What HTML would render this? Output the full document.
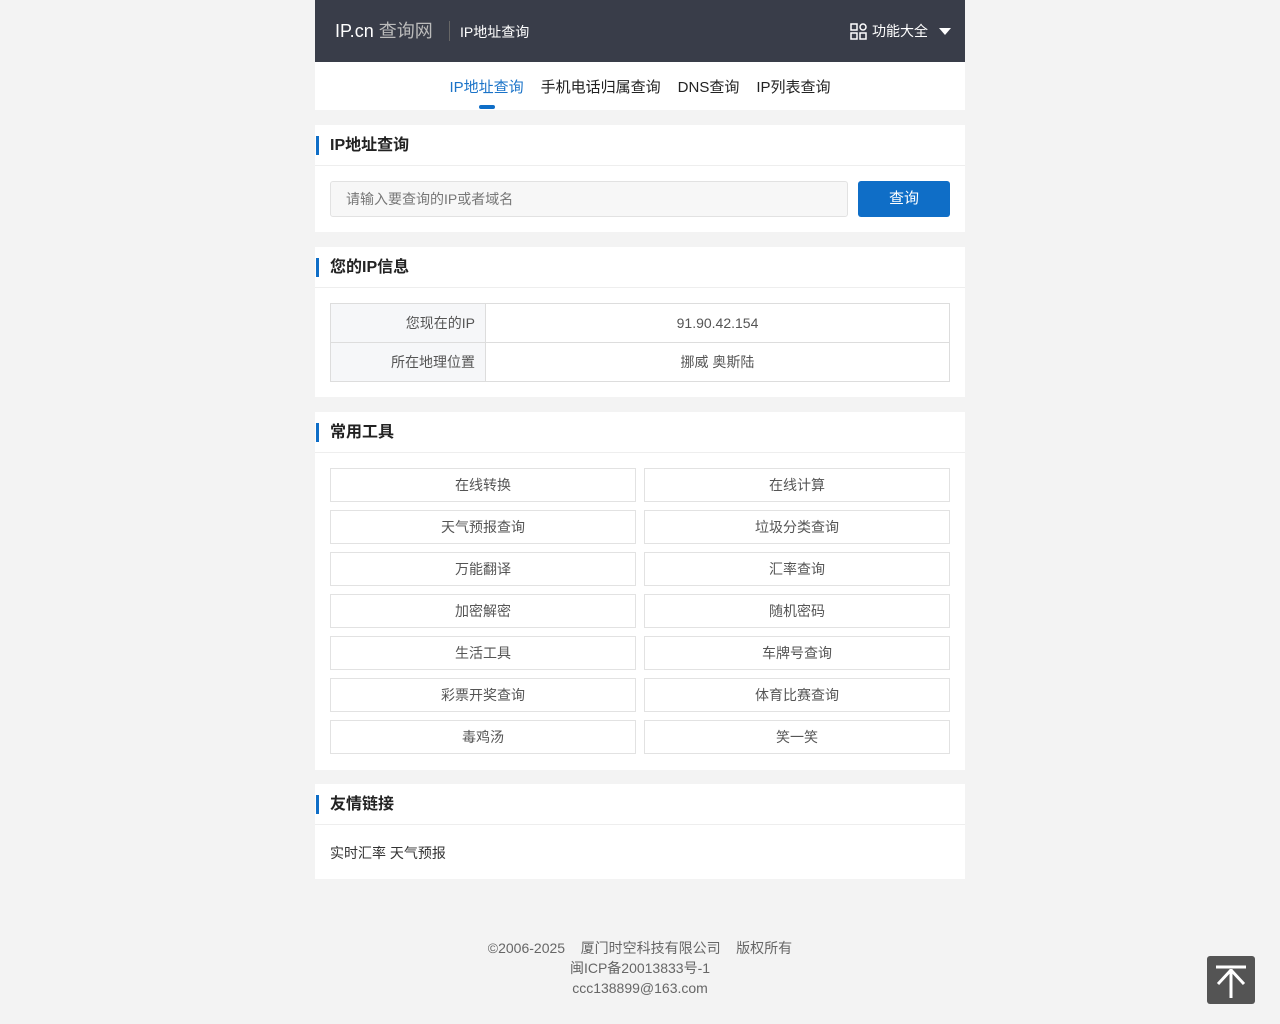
<!DOCTYPE html>
<html><head><meta charset="utf-8"><style>
*{margin:0;padding:0;box-sizing:border-box}
body{width:1280px;height:1024px;background:#f3f3f3;font-family:"Liberation Sans","Noto Sans CJK SC",sans-serif;color:#333;position:relative;overflow:hidden}
.wrap{position:absolute;left:315px;width:650px}
.hdr{top:0;height:62px;background:#393d49;color:#fff}
.logo{position:absolute;left:20px;top:17px;font-size:18px;color:#fff}
.sep{position:absolute;left:134px;top:21px;width:1px;height:20px;background:#666}
.sub{position:absolute;left:145px;top:22px;font-size:14px}
.fn{position:absolute;right:14px;top:21px;font-size:14px;display:flex;align-items:center;gap:5px}
.nav{top:62px;height:48px;background:#fff;text-align:center;font-size:15px}
.nav span{display:inline-block;margin:0 8.5px;line-height:48px;padding-top:2px;position:relative;color:#222}
.nav .on{color:#1a73c8}
.nav .on:after{content:"";position:absolute;left:50%;margin-left:-8px;bottom:3px;width:16px;height:4px;border-radius:2px;background:#0f6ec7}
.card{background:#fff}
.ct{height:41px;border-bottom:1px solid #eee;line-height:41px;padding-left:15px;font-size:16px;font-weight:bold;color:#222;position:relative}
.ct:before{content:"";position:absolute;left:1px;top:11px;width:3px;height:19px;background:#0f6ec7}
.in{position:absolute;left:15px;top:56px;width:518px;height:36px;border:1px solid #e2e2e2;border-radius:3px;background:#f7f7f7;font-size:14px;color:#777;padding-left:15px;line-height:34px}
.btn{position:absolute;left:543px;top:56px;width:92px;height:36px;background:#0f6ec7;border-radius:3px;color:#fff;text-align:center;line-height:36px;font-size:15px}
table{position:absolute;left:15px;top:56px;width:620px;border-collapse:collapse;font-size:14px}
td{height:39px;border:1px solid #ddd}
td.k{width:155px;background:#f6f7f9;text-align:right;padding-right:10px;color:#555;border-right:none}
td.v{text-align:center;color:#555}
.grid{position:absolute;left:15px;top:56px;width:620px;display:grid;grid-template-columns:306px 306px;column-gap:8px;row-gap:8px}
.grid div{height:34px;border:1px solid #e2e2e2;text-align:center;line-height:32px;font-size:14px;color:#555}
.foot{position:absolute;left:0;width:1280px;top:938px;text-align:center;font-size:14px;color:#666;line-height:20px}
.top{position:absolute;left:1207px;top:956px;width:48px;height:48px;background:#545454;border-radius:3px}
</style></head><body>
<div class="wrap hdr"><div class="logo">IP.cn <span style="color:#bbb">查询网</span></div><div class="sep"></div><div class="sub">IP地址查询</div>
<div class="fn"><svg width="17" height="17" viewBox="0 0 17 17" fill="none" stroke="#fff" stroke-width="1.5"><rect x="1" y="1" width="6" height="6"/><circle cx="13" cy="4" r="3"/><rect x="1" y="10" width="6" height="6"/><rect x="10" y="10" width="6" height="6"/></svg>功能大全<span style="margin-left:6px;border:6px solid transparent;border-top:7px solid #fff;margin-top:6px"></span></div></div>
<div class="wrap nav"><span class="on">IP地址查询</span><span>手机电话归属查询</span><span>DNS查询</span><span>IP列表查询</span></div>
<div class="wrap card" style="top:125px;height:107px"><div class="ct">IP地址查询</div><div class="in">请输入要查询的IP或者域名</div><div class="btn">查询</div></div>
<div class="wrap card" style="top:247px;height:150px"><div class="ct">您的IP信息</div>
<table><tr><td class="k">您现在的IP</td><td class="v">91.90.42.154</td></tr><tr><td class="k">所在地理位置</td><td class="v">挪威 奥斯陆</td></tr></table></div>
<div class="wrap card" style="top:412px;height:358px"><div class="ct">常用工具</div>
<div class="grid"><div>在线转换</div><div>在线计算</div><div>天气预报查询</div><div>垃圾分类查询</div><div>万能翻译</div><div>汇率查询</div><div>加密解密</div><div>随机密码</div><div>生活工具</div><div>车牌号查询</div><div>彩票开奖查询</div><div>体育比赛查询</div><div>毒鸡汤</div><div>笑一笑</div></div></div>
<div class="wrap card" style="top:784px;height:95px"><div class="ct">友情链接</div><div style="position:absolute;left:15px;top:59px;font-size:14px;color:#333">实时汇率 天气预报</div></div>
<div class="foot">©2006-2025 &nbsp;&nbsp; 厦门时空科技有限公司 &nbsp;&nbsp; 版权所有<br>闽ICP备20013833号-1<br>ccc138899@163.com</div>
<div class="top"><svg width="48" height="48" viewBox="0 0 48 48" fill="none" stroke="#fff" stroke-width="3"><path d="M9 11H39M24 13V42M24 14L11 28M24 14L37 28"/></svg></div>
</body></html>
